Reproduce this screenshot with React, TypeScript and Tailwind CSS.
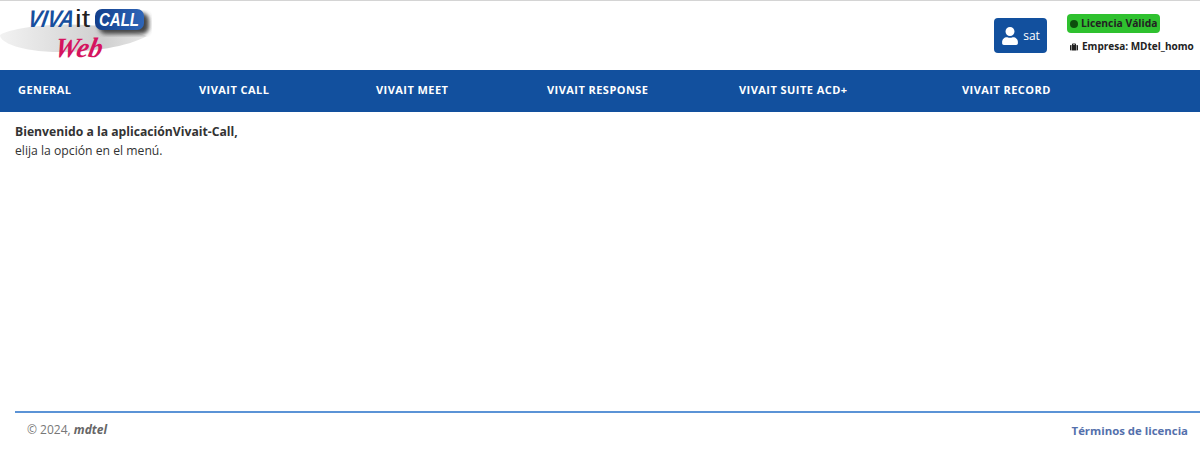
import { FaSuitcase, FaUser } from "react-icons/fa";

const menu = [
  { label: "GENERAL", width: "w-[181px]" },
  { label: "VIVAIT CALL", width: "w-[177px]" },
  { label: "VIVAIT MEET", width: "w-[171px]" },
  { label: "VIVAIT RESPONSE", width: "w-[192px]" },
  { label: "VIVAIT SUITE ACD+", width: "w-[223px]" },
  { label: "VIVAIT RECORD", width: "w-[150px]" },
];

const Logo = () => (
  <svg width="152" height="60" viewBox="0 0 152 60" className="shrink-0">
    <defs>
      <linearGradient id="swoosh" x1="0" x2="1" y1="0" y2="0">
        <stop offset="0" stopColor="#f2f2f2" />
        <stop offset="0.7" stopColor="#cfcfcf" />
        <stop offset="1" stopColor="#e8e8e8" />
      </linearGradient>
      <linearGradient id="pill" x1="0" x2="1" y1="0" y2="0">
        <stop offset="0" stopColor="#123f8c" />
        <stop offset="1" stopColor="#2f66b8" />
      </linearGradient>
      <filter id="blur">
        <feGaussianBlur stdDeviation="2" />
      </filter>
    </defs>
    <path d="M0 31 C18 20 100 14 147 32 C120 47 62 51 32 46 C12 43 0 37 0 31 Z" fill="url(#swoosh)" />
    <rect x="99" y="9" width="50" height="21" rx="7" fill="#444" filter="url(#blur)" />
    <rect x="95" y="5" width="49" height="21" rx="7" fill="url(#pill)" />
    <text transform="translate(27 23) skewX(-10)" textLength="46" lengthAdjust="spacingAndGlyphs" fontFamily="Liberation Sans" fontWeight="700" fontStyle="italic" fontSize="24" fill="#174f9e">
      VIVA
    </text>
    <text x="75" y="23" textLength="15" lengthAdjust="spacingAndGlyphs" fontFamily="Liberation Sans" fontSize="23" fill="#222">
      it
    </text>
    <text x="99" y="22" textLength="40" lengthAdjust="spacingAndGlyphs" fontFamily="Liberation Sans" fontWeight="700" fontStyle="italic" fontSize="18" fill="#fff">
      CALL
    </text>
    <text transform="translate(53 53) skewX(-12)" textLength="48" lengthAdjust="spacingAndGlyphs" fontFamily="Liberation Serif" fontWeight="700" fontStyle="italic" fontSize="28" fill="#d5145f">
      Web
    </text>
  </svg>
);

export default function App() {
  return (
    <div className="flex h-[463px] flex-col bg-white font-['Open_Sans',sans-serif] text-[12.2px] text-[#333]">
      <header className="flex h-[70px] items-start border-t border-[#d4d4d4] pt-[3px]">
        <Logo />
        <div className="ml-auto flex items-start pr-[6px] pt-[14px]">
          <button className="flex h-[35px] w-[53px] items-center justify-center gap-[4px] rounded bg-[#12509e] text-[12px] text-white">
            <FaUser className="text-[18px]" />
            sat
          </button>
          <div className="ml-[20px] flex w-[127px] flex-col items-start">
            <span className="flex h-[19px] w-[93px] -translate-y-[4px] items-center gap-[3px] rounded bg-[#2fc12f] pl-[3px] text-[10.3px] font-bold text-[#222]">
              <span className="h-[8px] w-[8px] rounded-full bg-[#0d4d0d]" />
              Licencia Válida
            </span>
            <span className="mt-[2px] flex items-center gap-[4px] pl-[3px] text-[10px] font-bold whitespace-nowrap text-[#222]">
              <FaSuitcase className="text-[8px]" />
              <span>Empresa: MDtel_homo</span>
            </span>
          </div>
        </div>
      </header>

      <nav className="flex h-[42px] items-center bg-[#12509e] pb-[2px] pl-[18px]">
        {menu.map((item) => (
          <a key={item.label} className={`${item.width} shrink-0 text-[11px] font-bold tracking-[0.45px] text-white`}>
            {item.label}
          </a>
        ))}
      </nav>

      <main className="flex-1 px-[15px] pt-[10px] leading-[19px]">
        <p className="font-bold">Bienvenido a la aplicaciónVivait-Call,</p>
        <p>elija la opción en el menú.</p>
      </main>

      <footer className="mb-[24px] ml-[15px] flex h-[28px] items-end justify-between border-t-2 border-[#5b93d6] pl-[12px] pr-[12px] text-[12px]">
        <span className="text-[#777]">
          © 2024, <b className="italic text-[#666]">mdtel</b>
        </span>
        <a className="text-[11.4px] font-bold text-[#5470ac]">Términos de licencia</a>
      </footer>
    </div>
  );
}
